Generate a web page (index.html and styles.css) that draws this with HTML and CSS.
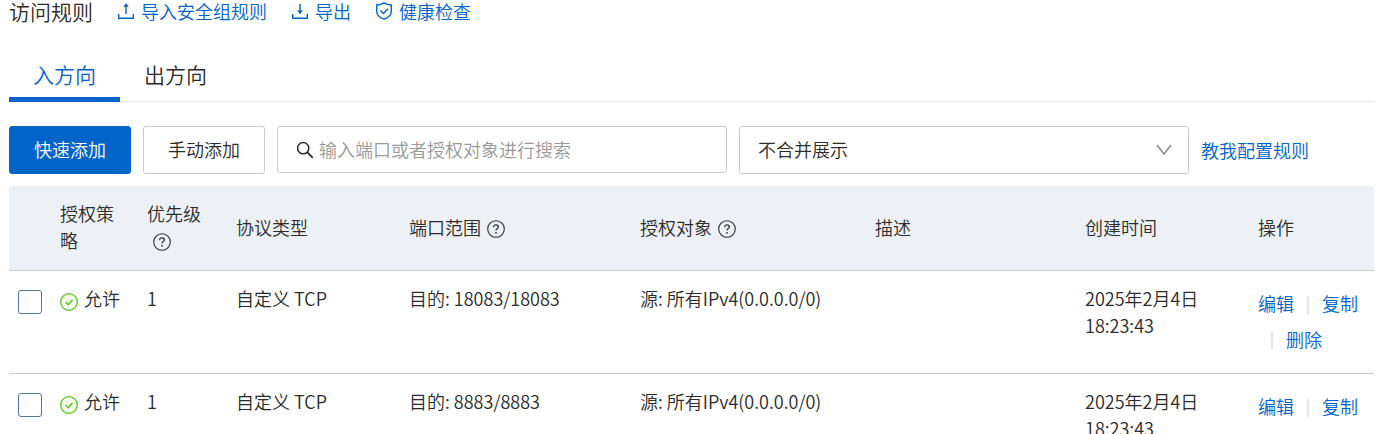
FILE: index.html
```html
<!DOCTYPE html>
<html lang="zh-CN">
<head>
<meta charset="utf-8">
<title>访问规则</title>
<link rel="stylesheet" href="styles.css">
</head>
<body>
<svg class="sprite" aria-hidden="true">
  <symbol id="help" viewBox="0 0 18 18"><circle cx="9" cy="9" r="8.3" fill="none" stroke="currentColor" stroke-width="1.1"/><path d="M6.6 7.2C6.6 5.7 7.6 4.8 9 4.8s2.4.9 2.4 2.1c0 1.6-2.4 1.8-2.4 3.6" fill="none" stroke="currentColor" stroke-width="1.2"/><circle cx="9" cy="12.8" r=".9" fill="currentColor"/></symbol>
  <symbol id="ok" viewBox="0 0 18 18"><circle cx="9" cy="9" r="8.3" fill="#f3fdea" stroke="#52c41a" stroke-width="1.3"/><path d="M5.6 9l2.6 2.7 4.4-5" fill="none" stroke="#52c41a" stroke-width="1.4"/></symbol>
</svg>
<main class="page">
  <header class="heading">
    <h1 class="title">访问规则</h1>
    <a class="tool" href="#"><svg class="tool-icon" viewBox="0 0 18 18"><path d="M1.7 12v4.3h14.6V12M9 12V3" fill="none" stroke="currentColor" stroke-width="1.4"/><path d="M9 1.2L6.2 4.8h5.6z" fill="currentColor"/></svg>导入安全组规则</a>
    <a class="tool" href="#"><svg class="tool-icon" viewBox="0 0 18 18"><path d="M1.7 12v4.3h14.6V12M9 2v8" fill="none" stroke="currentColor" stroke-width="1.4"/><path d="M9 12.2L6.2 8.600h5.600z" fill="currentColor"/></svg>导出</a>
    <a class="tool" href="#"><svg class="tool-icon" viewBox="0 0 18 18"><path d="M9 .8c2.2 1.3 4.600 2 7.300 2.200v6.200c0 3.700-3 6.500-7.300 8-4.300-1.500-7.300-4.300-7.300-8V3C4.400 2.800 6.800 2.100 9 .8z" fill="none" stroke="currentColor" stroke-width="1.400"/><path d="M5.400 8.600l3 3 4.700-4.900" fill="none" stroke="currentColor" stroke-width="1.400"/></svg>健康检查</a>
  </header>

  <div class="tabs" role="tablist">
    <button class="tab tab-active" role="tab" aria-selected="true">入方向</button>
    <button class="tab" role="tab" aria-selected="false">出方向</button>
  </div>

  <div class="toolbar">
    <button class="btn btn-primary">快速添加</button>
    <button class="btn">手动添加</button>
    <label class="search">
      <svg class="search-icon" viewBox="0 0 18 18"><circle cx="7.200" cy="7.200" r="5.600" fill="none" stroke="currentColor" stroke-width="1.500"/><path d="M11.200 11.200L16.800 16.800" fill="none" stroke="currentColor" stroke-width="1.800"/></svg>
      <input class="search-input" type="text" placeholder="输入端口或者授权对象进行搜索" aria-label="输入端口或者授权对象进行搜索">
    </label>
    <div class="picker">
      <select class="picker-select" aria-label="展示方式"><option>不合并展示</option></select>
      <svg class="picker-arrow" viewBox="0 0 16 12"><path d="M1 1l7 9 7-9" fill="none" stroke="currentColor" stroke-width="1.400"/></svg>
    </div>
    <a class="link" href="#">教我配置规则</a>
  </div>

  <table class="rules">
    <colgroup><col class="c-check"><col class="c-policy"><col class="c-priority"><col class="c-protocol"><col class="c-port"><col class="c-object"><col class="c-desc"><col class="c-time"><col class="c-action"></colgroup>
    <thead>
      <tr>
        <th></th>
        <th>授权策略</th>
        <th>优先级 <svg class="help"><use href="#help"/></svg></th>
        <th>协议类型</th>
        <th>端口范围<svg class="help"><use href="#help"/></svg></th>
        <th>授权对象<svg class="help"><use href="#help"/></svg></th>
        <th>描述</th>
        <th>创建时间</th>
        <th>操作</th>
      </tr>
    </thead>
    <tbody>
      <tr>
        <td class="check"><input class="box" type="checkbox" aria-label="选择 18083/18083"></td>
        <td><span class="status"><svg class="ok"><use href="#ok"/></svg>允许</span></td>
        <td>1</td>
        <td>自定义 TCP</td>
        <td>目的: 18083/18083</td>
        <td>源: 所有IPv4(0.0.0.0/0)</td>
        <td></td>
        <td>2025年2月4日 18:23:43</td>
        <td><div class="actions"><a class="link" href="#">编辑</a><span class="divider"></span><a class="link" href="#">复制</a><span class="divider"></span><a class="link" href="#">删除</a></div></td>
      </tr>
      <tr>
        <td class="check"><input class="box" type="checkbox" aria-label="选择 8883/8883"></td>
        <td><span class="status"><svg class="ok"><use href="#ok"/></svg>允许</span></td>
        <td>1</td>
        <td>自定义 TCP</td>
        <td>目的: 8883/8883</td>
        <td>源: 所有IPv4(0.0.0.0/0)</td>
        <td></td>
        <td>2025年2月4日 18:23:43</td>
        <td><div class="actions"><a class="link" href="#">编辑</a><span class="divider"></span><a class="link" href="#">复制</a><span class="divider"></span><a class="link" href="#">删除</a></div></td>
      </tr>
    </tbody>
  </table>
</main>
</body>
</html>
```
FILE: styles.css
```css
* { box-sizing: border-box; }

body {
  margin: 0;
  height: 100vh;
  overflow: hidden;
  background: #fefefe;
  color: #2b2b2b;
  font: 350 18px/27px "Noto Sans CJK SC", sans-serif;
}

button, input, select { font: inherit; color: inherit; }

.sprite { display: none; }

.page { padding: 0 26px 0 9px; }

.heading {
  display: flex;
  align-items: center;
  gap: 24px;
  height: 21px;
}

.title {
  margin: 0;
  font-size: 21px;
  font-weight: 350;
  line-height: 24px;
}

.tool {
  display: flex;
  align-items: center;
  gap: 6px;
  color: #0064c8;
  line-height: 24px;
  text-decoration: none;
}

.tool-icon { width: 18px; height: 18px; }

.tabs {
  display: flex;
  margin-top: 30px;
  box-shadow: inset 0 -1px #e3e4e6;
}

.tab {
  height: 51px;
  padding: 0 24px;
  border: 0;
  border-bottom: 5px solid transparent;
  background: none;
  font-size: 21px;
}

.tab-active {
  border-bottom-color: #0064c8;
  color: #0064c8;
}

.toolbar {
  display: flex;
  align-items: flex-start;
  gap: 12px;
  margin: 24px 0 12px;
}

.btn {
  height: 48px;
  padding: 0 24px 2px;
  border: 1px solid #c8cacd;
  border-radius: 3px;
  background: #fff;
  white-space: nowrap;
}

.btn-primary {
  border-color: #0064c8;
  background: #0064c8;
  color: #fff;
}

.search {
  display: flex;
  flex: 0 1 450px;
  align-items: center;
  gap: 5px;
  height: 47px;
  padding: 0 18px;
  border: 1px solid #c8cacd;
  border-radius: 3px;
  background: #fff;
}

.search-icon { flex: none; width: 18px; height: 18px; }

.search-input {
  flex: 1;
  min-width: 0;
  padding: 0;
  border: 0;
  outline: 0;
  background: none;
}

.search-input::placeholder { color: #999; opacity: 1; }

.picker { position: relative; flex: 0 1 450px; }

.picker-select {
  width: 100%;
  height: 48px;
  padding: 0 18px 2px;
  border: 1px solid #c8cacd;
  border-radius: 3px;
  background: #fff;
  appearance: none;
}

.picker-arrow {
  position: absolute;
  top: 18px;
  right: 17px;
  width: 16px;
  height: 12px;
  color: #888;
  pointer-events: none;
}

.link {
  color: #0064c8;
  text-decoration: none;
  white-space: nowrap;
}

.toolbar .link { line-height: 48px; }

.rules {
  width: 100%;
  table-layout: fixed;
  border-collapse: separate;
  border-spacing: 0;
}

.c-check { width: 39px; }
.c-policy { width: 87px; }
.c-priority { width: 89px; }
.c-protocol { width: 173px; }
.c-port { width: 231px; }
.c-object { width: 235px; }
.c-desc { width: 210px; }
.c-time { width: 173px; }

.rules th, .rules td {
  padding: 14px 12px 16px;
  border-bottom: 1px solid #c8cacd;
  text-align: left;
}

.rules th {
  background: #edf1f6;
  font-weight: 350;
}

.rules th:first-child { border-top-left-radius: 3px; }
.rules th:last-child { border-top-right-radius: 3px; }

.rules td { vertical-align: top; }

.rules .check { padding: 19px 0 0 9px; }

.box {
  display: block;
  width: 24px;
  height: 24px;
  margin: 0;
  border: 1px solid #56789c;
  border-radius: 3px;
  background: #fff;
  appearance: none;
}

.help {
  width: 18px;
  height: 18px;
  margin-left: 6px;
  vertical-align: -3px;
}

.status {
  display: flex;
  align-items: center;
  gap: 6px;
}

.ok { width: 18px; height: 18px; margin-top: 6px; }

.actions {
  display: flex;
  flex-wrap: wrap;
  align-items: center;
  line-height: 36px;
}

.divider {
  width: 2px;
  height: 18px;
  margin: 4px 13px 0;
  background: #e3e4e6;
}
```
